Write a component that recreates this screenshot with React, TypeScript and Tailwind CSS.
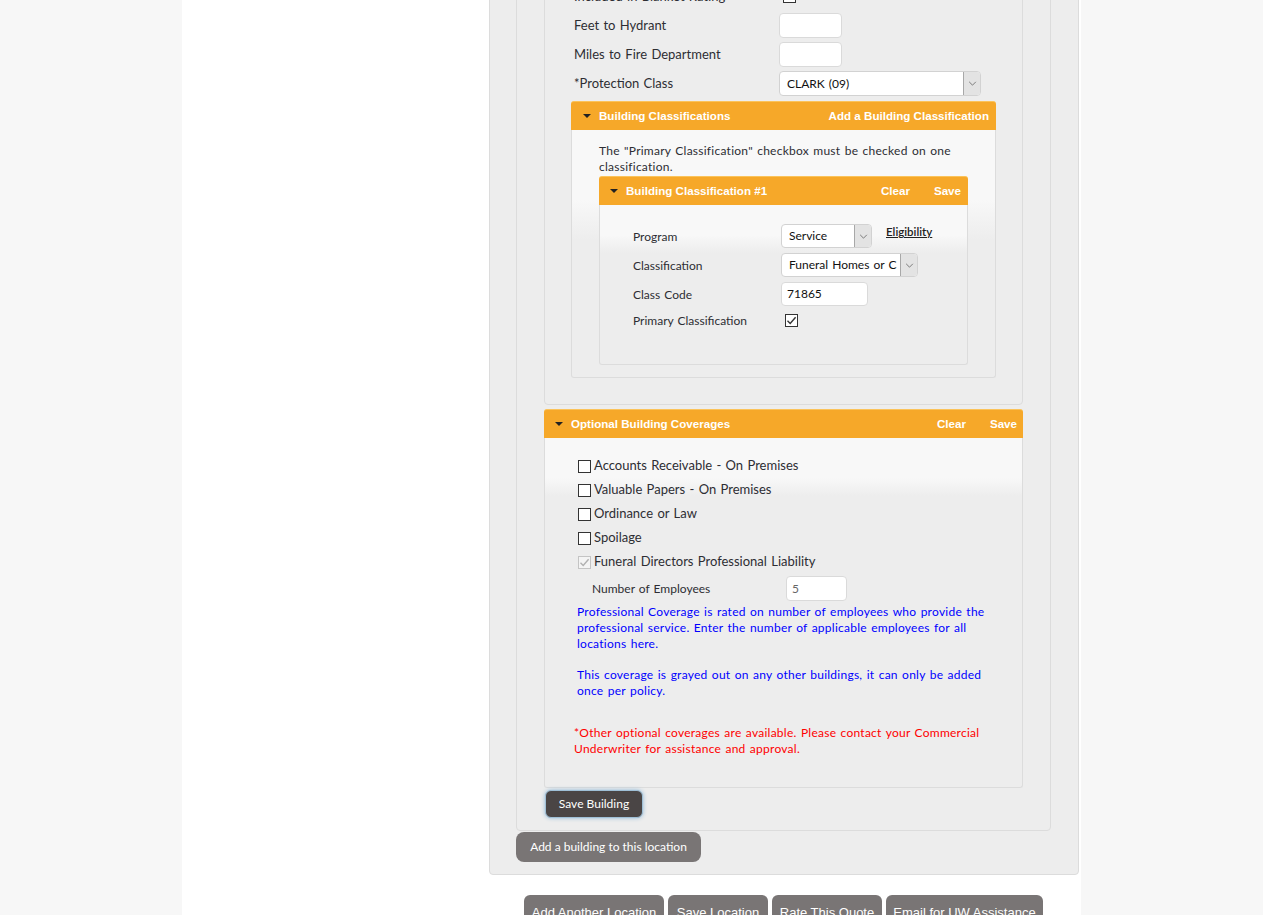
import React from "react";

const BODY = "font-['Lato','Liberation_Sans',sans-serif] [word-spacing:1px]";
const HEAD = "font-['Liberation_Sans',Arial,sans-serif] [word-spacing:0px]";

function Box({ checked = false, disabled = false }: { checked?: boolean; disabled?: boolean }) {
  return (
    <span
      className={
        "relative inline-block w-[13px] h-[13px] shrink-0 border " +
        (disabled ? "border-[#c4c4c4] bg-[#f4f4f4]" : "border-[#333] bg-white")
      }
    >
      {checked && (
        <svg viewBox="0 0 13 13" className="absolute left-[-1px] top-[-1px] w-[13px] h-[13px]">
          <path
            d="M2.5 6.8 L5.2 9.4 L10.6 3.2"
            fill="none"
            stroke={disabled ? "#b0b0b0" : "#333"}
            strokeWidth="1.4"
          />
        </svg>
      )}
    </span>
  );
}

function Chevron() {
  return (
    <svg viewBox="0 0 10 6" className="w-[9px] h-[5px]">
      <path d="M1 1 L5 5 L9 1" fill="none" stroke="#666" strokeWidth="1" />
    </svg>
  );
}

function Select({ value, w }: { value: string; w: string }) {
  return (
    <div className={"flex h-full bg-white border border-[#d2d2d2] rounded-[4px] overflow-hidden " + w}>
      <div className="flex-1 min-w-0 overflow-hidden whitespace-nowrap pl-[7px] flex items-center text-[12px] text-[#111]">
        {value}
      </div>
      <div className="w-[17px] shrink-0 bg-[#e3e3e3] border-l border-[#a8a8a8] flex items-center justify-center">
        <Chevron />
      </div>
    </div>
  );
}

function Triangle() {
  return (
    <span className="inline-block w-0 h-0 border-l-[4px] border-r-[4px] border-t-[4px] border-l-transparent border-r-transparent border-t-[#222]" />
  );
}

function OrangeHeader({
  title,
  left,
  right,
  children,
}: {
  title: string;
  left: string;
  right: string;
  children?: React.ReactNode;
}) {
  return (
    <div
      className={
        "h-[29px] bg-[#f6a829] border-t border-[#fbc35a] rounded-t-[3px] flex items-center text-white font-bold text-[11.6px] " +
        HEAD +
        " " +
        left +
        " " +
        right
      }
    >
      <Triangle />
      <span className="ml-[8px]">{title}</span>
      <div className="flex-1" />
      {children}
    </div>
  );
}

function FieldRow({ label, children }: { label: string; children: React.ReactNode }) {
  return (
    <div className="flex items-center h-[25px]">
      <div className="w-[234px] shrink-0 pl-[29px] text-[13px] text-[#2d2d33] whitespace-nowrap">{label}</div>
      <div className="h-full flex items-center">{children}</div>
    </div>
  );
}

function TextInput({ w, value = "", muted = false }: { w: string; value?: string; muted?: boolean }) {
  return (
    <div
      className={
        "h-full bg-white border border-[#dadada] rounded-[4px] flex items-center pl-[5px] text-[12px] " +
        (muted ? "text-[#666] " : "text-[#111] ") +
        w
      }
    >
      {value}
    </div>
  );
}

function CovRow({ label, checked = false, disabled = false }: { label: string; checked?: boolean; disabled?: boolean }) {
  return (
    <div className="flex items-center h-[24px]">
      <Box checked={checked} disabled={disabled} />
      <span className="ml-[3px] text-[13px] text-[#2d2d33] whitespace-nowrap">{label}</span>
    </div>
  );
}

export default function App() {
  return (
    <div className={"w-[1263px] h-[915px] overflow-hidden bg-[#f7f7f7] flex " + BODY}>
      <div className="w-[182px] shrink-0" />
      <div className="w-[899px] shrink-0 bg-white h-full overflow-hidden">
        <div className="-mt-[60px] pl-[307px]">
          {/* Location panel */}
          <div className="w-[590px] bg-[#ededed] border border-[#dcdcdc] rounded-[4px] pt-[10px] pl-[26px] pb-[12px]">
            {/* Building panel */}
            <div className="w-[535px] bg-[#ededed] border border-[#dcdcdc] rounded-[4px] pt-[10px] pl-[27px] pb-[12px]">
              {/* Fields panel */}
              <div className="w-[479px] bg-[#ededed] border border-[#dcdcdc] rounded-[4px] pt-[21px] pb-[26px]">
                <div className="flex flex-col gap-[4px]">
                  <FieldRow label="Included in Blanket Rating">
                    <span className="ml-[4px] flex items-center">
                      <Box />
                    </span>
                  </FieldRow>
                  <FieldRow label="Feet to Hydrant">
                    <TextInput w="w-[63px]" />
                  </FieldRow>
                  <FieldRow label="Miles to Fire Department">
                    <TextInput w="w-[63px]" />
                  </FieldRow>
                  <FieldRow label="*Protection Class">
                    <Select value="CLARK (09)" w="w-[202px]" />
                  </FieldRow>
                </div>

                {/* Building Classifications */}
                <div className="mt-[5px] ml-[26px] w-[425px]">
                  <OrangeHeader title="Building Classifications" left="pl-[12px]" right="pr-[7px]">
                    <span>Add a Building Classification</span>
                  </OrangeHeader>
                  <div className="border-x border-b border-[#dcdcdc] rounded-b-[3px] bg-[linear-gradient(to_bottom,#f8f8f8_0px,#f8f8f8_70px,#ededed_110px)] pl-[27px] pt-[12px] pb-[12px]">
                    <div className="w-[369px] text-[12px] leading-[16px] text-[#2d2d33] tracking-[0.25px] pt-[1px] -mb-[1px]">
                      The "Primary Classification" checkbox must be checked on one classification.
                    </div>
                    <div className="mt-[2px] w-[369px]">
                      <OrangeHeader title="Building Classification #1" left="pl-[11px]" right="pr-[7px]">
                        <span>Clear</span>
                        <span className="ml-[24px]">Save</span>
                      </OrangeHeader>
                      <div className="border-x border-b border-[#dcdcdc] rounded-b-[3px] bg-[linear-gradient(to_bottom,#f8f8f8_0px,#f8f8f8_30px,#ededed_48px)] pl-[33px] pt-[19px] pb-[34px] text-[12px] text-[#2d2d33]">
                        <div className="flex items-center h-[24px]">
                          <div className="w-[148px] pt-[1px]">Program</div>
                          <div className="h-full">
                            <Select value="Service" w="w-[91px]" />
                          </div>
                          <span className="ml-[14px] self-start -mt-[1px] text-[11.5px] font-semibold underline text-[#222]">
                            Eligibility
                          </span>
                        </div>
                        <div className="flex items-center h-[24px] mt-[5px]">
                          <div className="w-[148px] pt-[1px]">Classification</div>
                          <div className="h-full">
                            <Select value="Funeral Homes or C" w="w-[137px]" />
                          </div>
                        </div>
                        <div className="flex items-center h-[24px] mt-[5px]">
                          <div className="w-[148px] pt-[1px]">Class Code</div>
                          <TextInput w="w-[87px]" value="71865" />
                        </div>
                        <div className="flex items-center h-[20px] mt-[4px]">
                          <div className="w-[148px] pt-[1px]">Primary Classification</div>
                          <span className="ml-[4px] flex">
                            <Box checked />
                          </span>
                        </div>
                      </div>
                    </div>
                  </div>
                </div>
              </div>

              {/* Optional Building Coverages */}
              <div className="mt-[4px] w-[479px]">
                <OrangeHeader title="Optional Building Coverages" left="pl-[11px]" right="pr-[6px]">
                  <span>Clear</span>
                  <span className="ml-[24px]">Save</span>
                </OrangeHeader>
                <div className="border-x border-b border-[#dcdcdc] rounded-b-[3px] bg-[linear-gradient(to_bottom,#f8f8f8_0px,#f8f8f8_40px,#ededed_58px)] pl-[33px] pt-[16px] pb-[30px]">
                  <CovRow label="Accounts Receivable - On Premises" />
                  <CovRow label="Valuable Papers - On Premises" />
                  <CovRow label="Ordinance or Law" />
                  <CovRow label="Spoilage" />
                  <CovRow label="Funeral Directors Professional Liability" checked disabled />
                  <div className="flex items-center h-[25px] mt-[2px] ml-[14px]">
                    <div className="w-[194px] text-[12px] text-[#2d2d33]">Number of Employees</div>
                    <TextInput w="w-[61px]" value="5" muted />
                  </div>
                  <div className="mt-[3px] -ml-[1px] w-[412px] text-[12px] leading-[16px] text-[#0000ff] tracking-[0.25px]">
                    <p>
                      Professional Coverage is rated on number of employees who provide the professional service. Enter
                      the number of applicable employees for all locations here.
                    </p>
                    <p className="mt-[15px]">
                      This coverage is grayed out on any other buildings, it can only be added once per policy.
                    </p>
                  </div>
                  <div className="mt-[26px] -ml-[4px] w-[412px] text-[12px] leading-[16px] text-[#ff0000] tracking-[0.25px]">
                    *Other optional coverages are available. Please contact your Commercial Underwriter for assistance
                    and approval.
                  </div>
                </div>
              </div>

              <button className="mt-[2px] ml-[1px] w-[98px] h-[28px] rounded-[6px] bg-[#4a4545] border border-[#9fbfd6] shadow-[0_0_4px_#8fb8d8] text-white text-[12px] flex items-center justify-center">
                Save Building
              </button>
            </div>

            <button className="mt-[1px] w-[185px] h-[30px] rounded-[8px] bg-[#797575] text-white text-[12px] flex items-center justify-center">
              Add a building to this location
            </button>
          </div>

          <div className={"mt-[20px] ml-[35px] flex gap-[4px] " + HEAD}>
            {[
              ["Add Another Location", "w-[140px]"],
              ["Save Location", "w-[100px]"],
              ["Rate This Quote", "w-[110px]"],
              ["Email for UW Assistance", "w-[157px]"],
            ].map(([t, w]) => (
              <button
                key={t}
                className={"h-[32px] rounded-[6px] bg-[#797575] text-white text-[13px] flex items-start justify-center pt-[8px] " + w}
              >
                {t}
              </button>
            ))}
          </div>
        </div>
      </div>
    </div>
  );
}
